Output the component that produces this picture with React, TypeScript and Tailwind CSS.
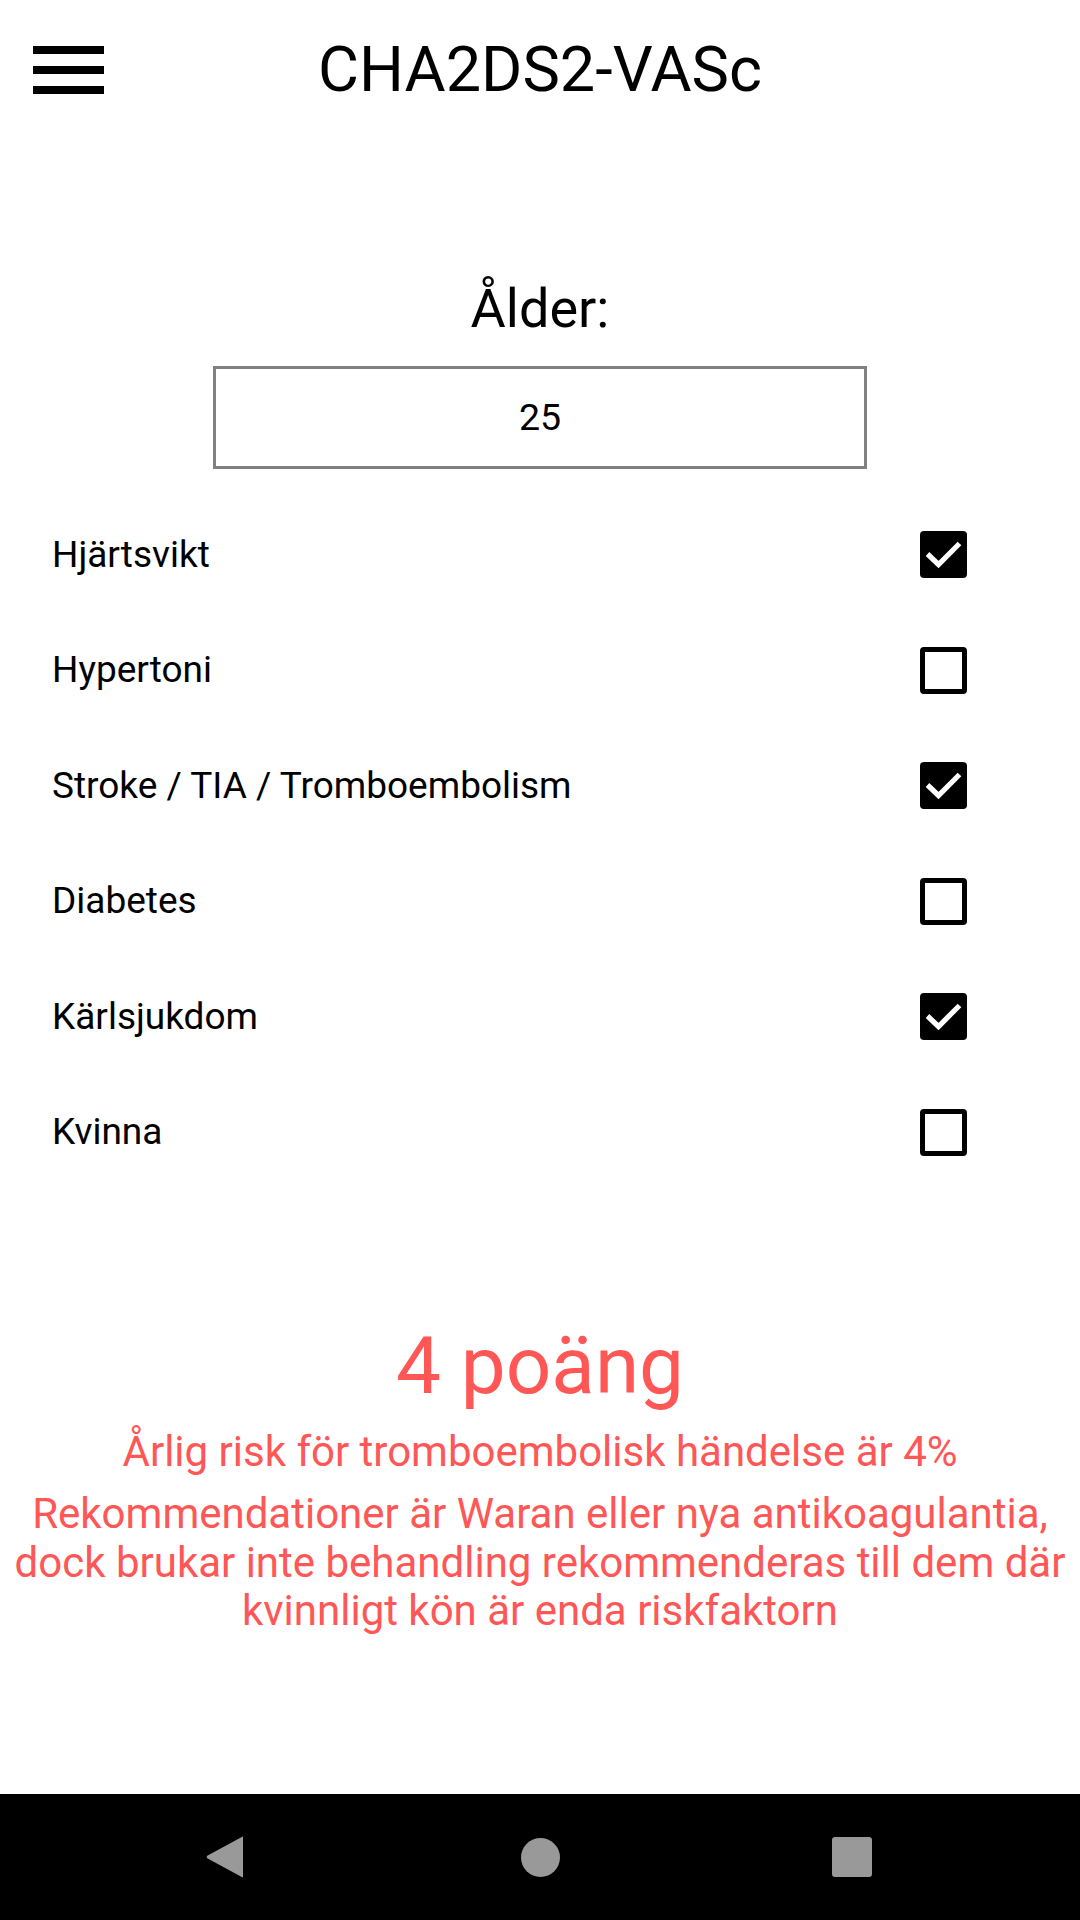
import { useState } from "react";

const factors = [
  { label: "Hjärtsvikt", checked: true },
  { label: "Hypertoni", checked: false },
  { label: "Stroke / TIA / Tromboembolism", checked: true },
  { label: "Diabetes", checked: false },
  { label: "Kärlsjukdom", checked: true },
  { label: "Kvinna", checked: false },
];

function CheckBox({ checked }: { checked: boolean }) {
  if (checked) {
    return (
      <div className="w-[47px] h-[47px] rounded-[4px] bg-black flex items-center justify-center">
        <svg width="47" height="47" viewBox="0 0 47 47">
          <path
            d="M7.5 23 L18.5 33.5 L39.5 12.5"
            fill="none"
            stroke="white"
            strokeWidth="5.2"
          />
        </svg>
      </div>
    );
  }
  return <div className="w-[47px] h-[47px] rounded-[4px] border-[5px] border-black" />;
}

export default function App() {
  const [age] = useState("25");

  return (
    <div
      className="w-[1080px] h-[1920px] bg-white flex flex-col text-black"
      style={{ fontFamily: "Roboto, 'Liberation Sans', sans-serif" }}
    >
      {/* toolbar */}
      <header className="h-[139px] flex-shrink-0 grid grid-cols-[1fr_auto_1fr] items-center">
        <div className="pl-[33px] flex flex-col gap-[12px]">
          <div className="w-[71px] h-[8px] bg-black" />
          <div className="w-[71px] h-[8px] bg-black" />
          <div className="w-[71px] h-[8px] bg-black" />
        </div>
        <h1 className="text-[63px] leading-[72px] font-normal">CHA2DS2-VASc</h1>
        <div />
      </header>

      {/* age */}
      <div className="mt-[139px] text-center text-[54px] leading-[62px]">Ålder:</div>
      <div className="mt-[26px] mx-auto w-[654px] h-[103px] border-[3px] border-[#808080] flex items-center justify-center text-[37.5px]">
        {age}
      </div>

      {/* risk factors */}
      <div className="mt-[28px] flex flex-col">
        {factors.map((f) => (
          <div key={f.label} className="h-[115.5px] flex items-center justify-between pl-[52px] pr-[113px]">
            <span className="text-[37px] leading-[44px]">{f.label}</span>
            <CheckBox checked={f.checked} />
          </div>
        ))}
      </div>

      {/* result */}
      <div className="mt-[130px] flex flex-col items-center text-center text-[#ff5656]">
        <div className="text-[80px] leading-[92px]">4 poäng</div>
        <div className="mt-[15px] text-[42px] leading-[49px]">Årlig risk för tromboembolisk händelse är 4%</div>
        <div className="mt-[14px] text-[42px] leading-[48.5px] px-[8px]">
          Rekommendationer är Waran eller nya antikoagulantia,
          <br />
          dock brukar inte behandling rekommenderas till dem där
          <br />
          kvinnligt kön är enda riskfaktorn
        </div>
      </div>

      <div className="flex-1" />

      {/* system navigation bar */}
      <nav className="h-[126px] flex-shrink-0 bg-black flex items-center pl-[206px]">
        <svg width="38" height="42" viewBox="0 0 38 42">
          <path d="M37 1.5 L37 40.5 Q37 42 35.8 41 L1.2 22.2 Q0 21 1.2 19.8 L35.8 1 Q37 0 37 1.5 Z" fill="#999999" />
        </svg>
        <div className="ml-[277px] w-[39px] h-[39px] rounded-full bg-[#999999]" />
        <div className="ml-[272px] w-[40px] h-[40px] rounded-[3px] bg-[#999999]" />
      </nav>
    </div>
  );
}
